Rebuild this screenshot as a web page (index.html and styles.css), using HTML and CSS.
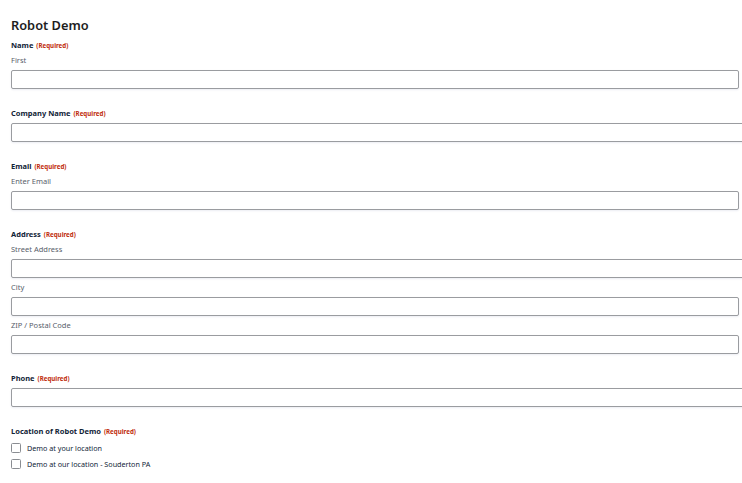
FILE: index.html
```html
<!DOCTYPE html>
<html lang="en">
<head>
<meta charset="utf-8">
<title>Robot Demo</title>
<link rel="stylesheet" href="styles.css">
</head>
<body>
<form class="form">
  <h1 class="form-title">Robot Demo</h1>

  <div class="field">
    <div class="label">Name <span class="req">(Required)</span></div>
    <div class="sub">First</div>
    <div class="input"></div>
  </div>

  <div class="field">
    <div class="label">Company Name <span class="req">(Required)</span></div>
    <div class="input input-wide"></div>
  </div>

  <div class="field">
    <div class="label">Email <span class="req">(Required)</span></div>
    <div class="sub">Enter Email</div>
    <div class="input"></div>
  </div>

  <div class="field">
    <div class="label">Address <span class="req">(Required)</span></div>
    <div class="sub">Street Address</div>
    <div class="input input-wide"></div>
    <div class="sub sub-next">City</div>
    <div class="input"></div>
    <div class="sub sub-next">ZIP / Postal Code</div>
    <div class="input"></div>
  </div>

  <div class="field">
    <div class="label">Phone <span class="req">(Required)</span></div>
    <div class="input input-wide"></div>
  </div>

  <div class="field">
    <div class="label label-loc">Location of Robot Demo <span class="req">(Required)</span></div>
    <div class="choices">
      <div class="choice"><span class="box"></span><span class="choice-text">Demo at your location</span></div>
      <div class="choice"><span class="box"></span><span class="choice-text">Demo at our location - Souderton PA</span></div>
    </div>
  </div>
</form>
</body>
</html>
```

FILE: styles.css
```css
html, body {
  margin: 0;
  padding: 0;
  background: #ffffff;
  overflow: hidden;
}

.form {
  font-family: "Noto Sans", "DejaVu Sans", sans-serif;
  padding: 15px 0 0 11px;
  display: flex;
  flex-direction: column;
  width: 760px;
}

.form-title {
  margin: 0;
  font-size: 12.8px;
  line-height: 20px;
  height: 20px;
  font-weight: 600;
  color: #1d1d1d;
}

.field {
  display: flex;
  flex-direction: column;
  margin-top: 19px;
}

.form-title + .field {
  margin-top: 5px;
}

.label {
  font-size: 7.5px;
  line-height: 11px;
  height: 11px;
  font-weight: 700;
  color: #112337;
  margin-bottom: 4px;
  white-space: nowrap;
}

.req {
  font-size: 6.2px;
  line-height: 1;
  font-weight: 700;
  color: #c02b0a;
  margin-left: 1px;
}

.sub {
  font-size: 7.5px;
  line-height: 11px;
  height: 11px;
  color: #585e6a;
  margin-bottom: 4px;
}

.sub-next {
  margin-top: 4px;
}

.input {
  width: 728px;
  height: 19px;
  flex: none;
  box-sizing: border-box;
  border: 1px solid #9a9ca0;
  border-radius: 2px;
  background: #fff;
  box-shadow: 0 1px 2px rgba(18, 25, 97, 0.08);
}

.input-wide {
  width: 760px;
}

.label-loc {
  margin-bottom: 6px;
}

.choices {
  display: flex;
  flex-direction: column;
  gap: 6px;
}

.choice {
  display: flex;
  align-items: center;
  gap: 6px;
  height: 10px;
}

.box {
  width: 10px;
  height: 10px;
  flex: none;
  box-sizing: border-box;
  border: 1px solid #8a8d92;
  border-radius: 1.5px;
  background: #fff;
}

.choice-text {
  font-size: 7.2px;
  line-height: 10px;
  color: #112337;
}
```
